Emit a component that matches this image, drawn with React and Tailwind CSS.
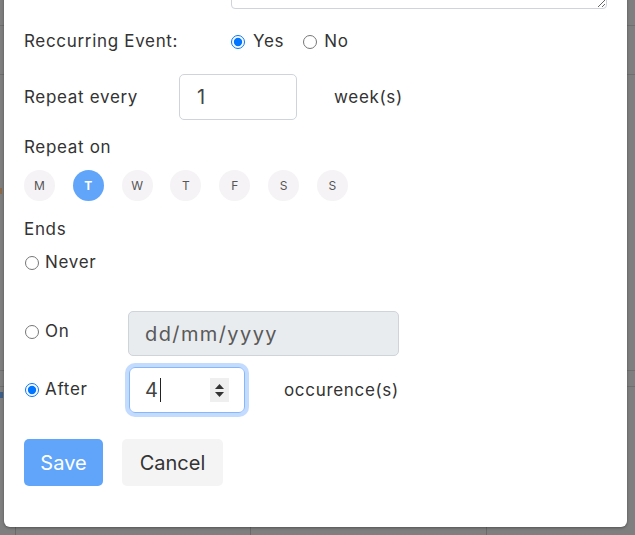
import React from "react";

const days = ["M", "T", "W", "T", "F", "S", "S"];

function Radio({ checked }) {
  return (
    <input
      type="radio"
      readOnly
      checked={checked}
      className="m-0 h-[14px] w-[14px] shrink-0 accent-[#0075ff]"
    />
  );
}

export default function App() {
  return (
    <div className="relative h-[535px] w-[635px] overflow-hidden bg-[#7f7f7f] font-['Inter',sans-serif] text-[17px] tracking-[0.04em] text-[#333333]">
      {/* page behind the overlay */}
      <div className="absolute left-0 right-0 top-[25px] h-px bg-[#6f6f6f]" />
      <div className="absolute left-0 right-0 top-[74px] h-px bg-[#6f6f6f]" />
      <div className="absolute left-0 right-0 top-[370px] h-px bg-[#6f6f6f]" />
      <div className="absolute left-0 right-0 top-[386px] h-px bg-[#6f6f6f]" />
      <div className="absolute bottom-0 left-[15px] h-[10px] w-px bg-[#6a6a6a]" />
      <div className="absolute bottom-0 left-[250px] h-[10px] w-px bg-[#6a6a6a]" />
      <div className="absolute bottom-0 left-[486px] h-[10px] w-px bg-[#6a6a6a]" />
      <div className="absolute left-0 top-[188px] h-[6px] w-[2px] bg-[#8a6a4a]" />
      <div className="absolute left-0 top-[392px] h-[6px] w-[3px] bg-[#3b5f8a]" />

      {/* modal */}
      <div className="relative ml-[4px] mt-[-51px] w-[623px] rounded-b-[6px] bg-white pb-[41px] pl-[20px] shadow-[0_1px_3px_rgba(0,0,0,0.35)]">
        <div className="flex h-[60px]">
          <div className="w-[207px]" />
          <textarea
            readOnly
            className="block h-[60px] w-[376px] rounded-[4px] border border-[#ced4da] bg-white"
          />
        </div>

        {/* recurring */}
        <div className="mt-[16px] flex h-[34px] items-center">
          <div className="w-[207px]">Reccurring Event:</div>
          <Radio checked />
          <span className="ml-[8px]">Yes</span>
          <span className="ml-[19px] flex items-center">
            <Radio checked={false} />
          </span>
          <span className="ml-[7px]">No</span>
        </div>

        {/* repeat every */}
        <div className="mt-[15px] flex h-[46px] items-center">
          <div className="w-[155px] pt-[2px]">Repeat every</div>
          <div className="flex h-[46px] w-[118px] items-center rounded-[5px] border border-[#ced4da] pl-[17px] text-[20px] text-[#444]">
            1
          </div>
          <div className="ml-[37px] pt-[2px]">week(s)</div>
        </div>

        <div className="mt-[16px] flex h-[24px] items-center">Repeat on</div>

        <div className="mt-[10px] flex gap-[17.8px]">
          {days.map((d, i) => (
            <div
              key={i}
              className={
                i === 1
                  ? "flex h-[31px] w-[31px] items-center justify-center rounded-full bg-[#60a5fa] text-[12px] font-bold tracking-normal text-white"
                  : "flex h-[31px] w-[31px] items-center justify-center rounded-full bg-[#f5f3f5] text-[12px] tracking-normal text-[#555]"
              }
            >
              {d}
            </div>
          ))}
        </div>

        <div className="mt-[17px] flex h-[24px] items-center">Ends</div>

        <div className="mt-[9px] flex h-[24px] items-center">
          <span className="ml-px flex items-center">
            <Radio checked={false} />
          </span>
          <span className="ml-[6px]">Never</span>
        </div>

        {/* on date */}
        <div className="mt-[36px] flex h-[45px] items-center">
          <div className="mb-[3px] flex w-[104px] items-center">
            <span className="ml-px flex items-center">
              <Radio checked={false} />
            </span>
            <span className="ml-[6px]">On</span>
          </div>
          <div className="flex h-[45px] w-[271px] items-center rounded-[5px] border border-[#ced4da] bg-[#e9ecef] pl-[16px] text-[20px] tracking-[0.07em] text-[#595959]">
            dd/mm/yyyy
          </div>
        </div>

        {/* after */}
        <div className="mt-[11px] flex h-[46px] items-center">
          <div className="flex w-[105px] items-center">
            <span className="ml-px flex items-center">
              <Radio checked />
            </span>
            <span className="ml-[6px]">After</span>
          </div>
          <div className="relative flex h-[46px] w-[116px] items-center rounded-[6px] border border-[#86b7fe] pl-[15px] text-[20px] text-[#444] shadow-[0_0_0_4px_rgba(13,110,253,0.25)]">
            4
            <span className="ml-px h-[24px] w-px bg-[#222]" />
            <div className="absolute left-[80px] top-[10px] flex h-[24px] w-[19px] flex-col items-center justify-center gap-[3px] bg-[#efefef]">
              <svg width="9" height="5" viewBox="0 0 9 5">
                <path d="M0 5 L4.5 0 L9 5 Z" fill="#333" />
              </svg>
              <svg width="9" height="5" viewBox="0 0 9 5">
                <path d="M0 0 L4.5 5 L9 0 Z" fill="#333" />
              </svg>
            </div>
          </div>
          <div className="ml-[39px] pt-[1px]">occurence(s)</div>
        </div>

        {/* buttons */}
        <div className="mt-[26px] flex gap-[19px]">
          <button className="h-[47px] w-[79px] rounded-[5px] bg-[#60a5fa] text-[20px] tracking-normal text-white">
            Save
          </button>
          <button className="h-[47px] w-[101px] rounded-[5px] bg-[#f5f4f5] text-[20px] tracking-normal text-[#333]">
            Cancel
          </button>
        </div>
      </div>
    </div>
  );
}
